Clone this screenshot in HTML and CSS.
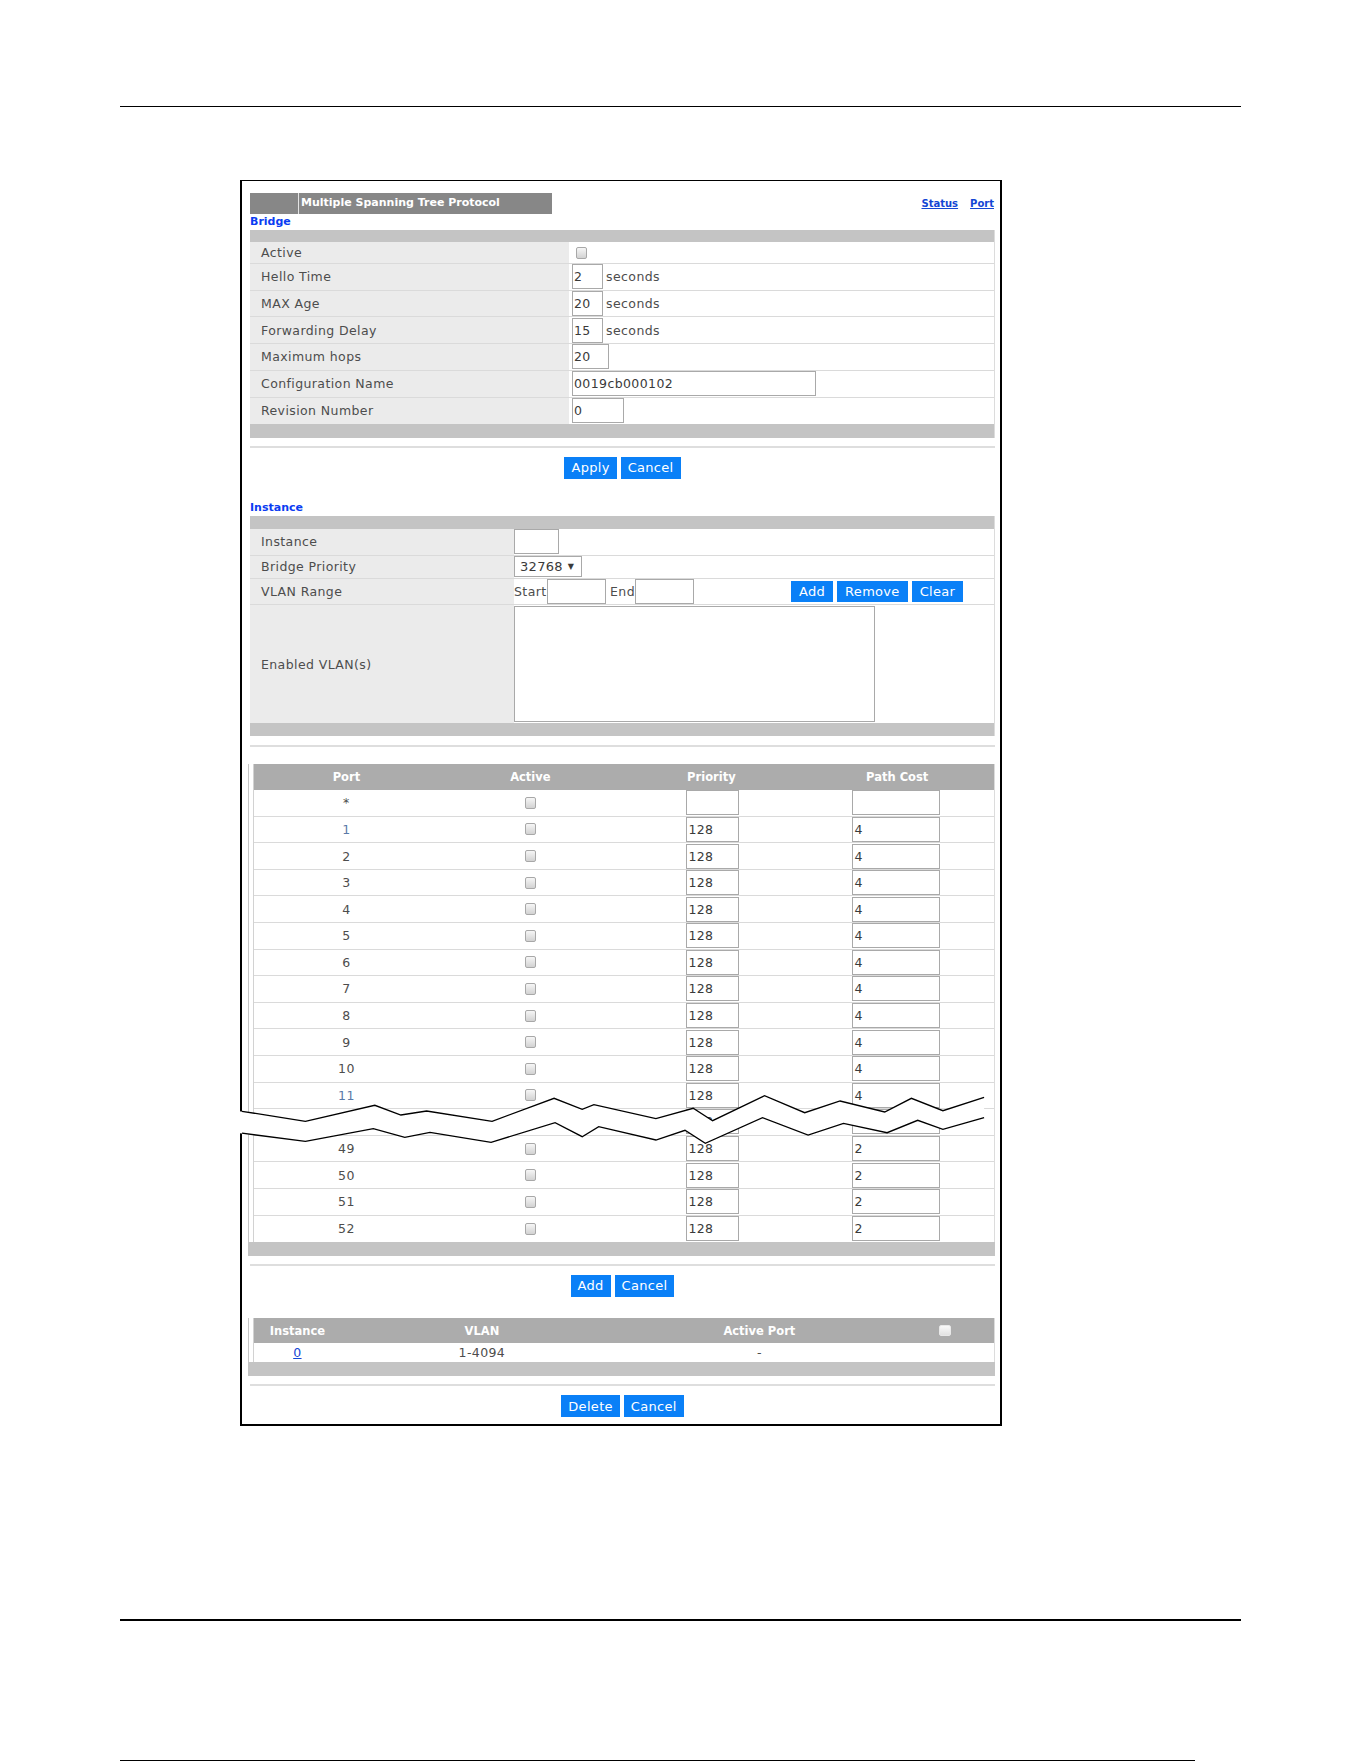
FILE: index.html
```html
<!DOCTYPE html>
<html>
<head>
    <meta charset="UTF-8">
    <title>Multiple Spanning Tree Protocol</title>
    <link rel="stylesheet" href="styles.css">
</head>
<body>
<div class="page">
    <div class="rule-top"></div>

    <div class="frame">
        <div class="title-row">
            <div class="title-bar"><span class="title-tab"></span><span class="title-text">Multiple Spanning Tree Protocol</span></div>
            <div class="top-links"><a href="#">Status</a><a href="#">Port</a></div>
        </div>

        <div class="sec-head">Bridge</div>
        <div class="form-box bridge">
            <div class="bar"></div>
            <div class="frow short"><div class="flabel">Active</div><div class="fval"><span class="cb"></span></div></div>
            <div class="frow"><div class="flabel">Hello Time</div><div class="fval"><input class="inp w-sec" value="2"><span class="unit">seconds</span></div></div>
            <div class="frow"><div class="flabel">MAX Age</div><div class="fval"><input class="inp w-sec" value="20"><span class="unit">seconds</span></div></div>
            <div class="frow"><div class="flabel">Forwarding Delay</div><div class="fval"><input class="inp w-sec" value="15"><span class="unit">seconds</span></div></div>
            <div class="frow"><div class="flabel">Maximum hops</div><div class="fval"><input class="inp w-hops" value="20"></div></div>
            <div class="frow"><div class="flabel">Configuration Name</div><div class="fval"><input class="inp w-name" value="0019cb000102"></div></div>
            <div class="frow last"><div class="flabel">Revision Number</div><div class="fval"><input class="inp w-rev" value="0"></div></div>
            <div class="bar foot"></div>
        </div>

        <div class="sep"></div>
        <div class="btn-row"><button class="btn">Apply</button><button class="btn">Cancel</button></div>

        <div class="sec-head gap">Instance</div>
        <div class="form-box inst">
            <div class="bar"></div>
            <div class="frow"><div class="flabel">Instance</div><div class="fval"><input class="inp w-inst" value=""></div></div>
            <div class="frow prio"><div class="flabel">Bridge Priority</div><div class="fval"><span class="sel">32768<span class="arrow">&#9660;</span></span></div></div>
            <div class="frow"><div class="flabel">VLAN Range</div>
                <div class="fval">
                    <span>Start</span><input class="inp w-vlan" value="">
                    <span class="end-lbl">End</span><input class="inp w-vlan" value="">
                    <div class="vlan-btns"><button class="btn sm">Add</button><button class="btn sm">Remove</button><button class="btn sm">Clear</button></div>
                </div>
            </div>
            <div class="frow tall last"><div class="flabel">Enabled VLAN(s)</div><div class="fval"><textarea class="vlan-list"></textarea></div></div>
            <div class="bar foot"></div>
        </div>

        <div class="sep"></div>

        <div class="grid-wrap ports">
            <div class="inner">
                <div class="prow phead"><div>Port</div><div>Active</div><div>Priority</div><div>Path Cost</div></div>
                <div class="prow"><div class="pnum">*</div><div><span class="cb"></span></div><div class="c-pri"><input class="inp pri" value=""></div><div class="c-cost"><input class="inp cost" value=""></div></div>
                <div class="prow"><div class="pnum blue">1</div><div><span class="cb"></span></div><div class="c-pri"><input class="inp pri" value="128"></div><div class="c-cost"><input class="inp cost" value="4"></div></div>
                <div class="prow"><div class="pnum">2</div><div><span class="cb"></span></div><div class="c-pri"><input class="inp pri" value="128"></div><div class="c-cost"><input class="inp cost" value="4"></div></div>
                <div class="prow"><div class="pnum">3</div><div><span class="cb"></span></div><div class="c-pri"><input class="inp pri" value="128"></div><div class="c-cost"><input class="inp cost" value="4"></div></div>
                <div class="prow"><div class="pnum">4</div><div><span class="cb"></span></div><div class="c-pri"><input class="inp pri" value="128"></div><div class="c-cost"><input class="inp cost" value="4"></div></div>
                <div class="prow"><div class="pnum">5</div><div><span class="cb"></span></div><div class="c-pri"><input class="inp pri" value="128"></div><div class="c-cost"><input class="inp cost" value="4"></div></div>
                <div class="prow"><div class="pnum">6</div><div><span class="cb"></span></div><div class="c-pri"><input class="inp pri" value="128"></div><div class="c-cost"><input class="inp cost" value="4"></div></div>
                <div class="prow"><div class="pnum">7</div><div><span class="cb"></span></div><div class="c-pri"><input class="inp pri" value="128"></div><div class="c-cost"><input class="inp cost" value="4"></div></div>
                <div class="prow"><div class="pnum">8</div><div><span class="cb"></span></div><div class="c-pri"><input class="inp pri" value="128"></div><div class="c-cost"><input class="inp cost" value="4"></div></div>
                <div class="prow"><div class="pnum">9</div><div><span class="cb"></span></div><div class="c-pri"><input class="inp pri" value="128"></div><div class="c-cost"><input class="inp cost" value="4"></div></div>
                <div class="prow"><div class="pnum">10</div><div><span class="cb"></span></div><div class="c-pri"><input class="inp pri" value="128"></div><div class="c-cost"><input class="inp cost" value="4"></div></div>
                <div class="prow"><div class="pnum blue">11</div><div><span class="cb"></span></div><div class="c-pri"><input class="inp pri" value="128"></div><div class="c-cost"><input class="inp cost" value="4"></div></div>
                <div class="prow"><div class="pnum">48</div><div><span class="cb"></span></div><div class="c-pri"><input class="inp pri" value="128"></div><div class="c-cost"><input class="inp cost" value="2"></div></div>
                <div class="prow"><div class="pnum">49</div><div><span class="cb"></span></div><div class="c-pri"><input class="inp pri" value="128"></div><div class="c-cost"><input class="inp cost" value="2"></div></div>
                <div class="prow"><div class="pnum">50</div><div><span class="cb"></span></div><div class="c-pri"><input class="inp pri" value="128"></div><div class="c-cost"><input class="inp cost" value="2"></div></div>
                <div class="prow"><div class="pnum">51</div><div><span class="cb"></span></div><div class="c-pri"><input class="inp pri" value="128"></div><div class="c-cost"><input class="inp cost" value="2"></div></div>
                <div class="prow last"><div class="pnum">52</div><div><span class="cb"></span></div><div class="c-pri"><input class="inp pri" value="128"></div><div class="c-cost"><input class="inp cost" value="2"></div></div>
            </div>
        </div>
        <div class="bar foot port-foot"></div>

        <div class="sep"></div>
        <div class="btn-row"><button class="btn">Add</button><button class="btn">Cancel</button></div>

        <div class="grid-wrap list">
            <div class="inner">
                <div class="lrow lhead"><div>Instance</div><div>VLAN</div><div>Active Port</div><div><span class="cb light"></span></div></div>
                <div class="lrow"><div><a href="#">0</a></div><div>1-4094</div><div>-</div><div></div></div>
            </div>
        </div>
        <div class="bar foot list-foot"></div>

        <div class="sep"></div>
        <div class="btn-row"><button class="btn">Delete</button><button class="btn">Cancel</button></div>
    </div>

    <div class="rule-bottom"></div>
    <div class="rule-edge"></div>

    <!-- page break mark over the port list -->
    <svg class="break" width="754" height="60" viewBox="0 0 754 60">
        <polygon fill="#fff" points="0,20.7 69.4,31.3 138.8,15.3 164.9,25 190.6,21 256.1,31.3 318.1,8.3 346.2,19.3 357.9,14.7 419.9,28.7 457.2,18.3 476.6,30.7 528.5,5.7 568.7,22.7 604.1,11 648.7,22 675.4,8.3 706.9,20.7 748.1,7.3 748.1,27.7 706.9,39.3 681.7,30.3 651.1,42.7 607.5,33.3 572.1,45 526.5,27.7 469.3,53.3 449,40.3 419.9,50 362.7,36.7 346.2,46.7 319.1,32.7 255.1,52.3 194,42.3 168.8,47.3 137.3,38.7 69.4,51.3 0,42.7"/>
        <polyline fill="none" stroke="#000" stroke-width="1.3" points="6,21.3 69.4,31.3 138.8,15.3 164.9,25 190.6,21 256.1,31.3 318.1,8.3 346.2,19.3 357.9,14.7 419.9,28.7 457.2,18.3 476.6,30.7 528.5,5.7 568.7,22.7 604.1,11 648.7,22 675.4,8.3 706.9,20.7 748.1,7.3"/>
        <polyline fill="none" stroke="#000" stroke-width="1.3" points="6,43.2 69.4,51.3 137.3,38.7 168.8,47.3 194,42.3 255.1,52.3 319.1,32.7 346.2,46.7 362.7,36.7 419.9,50 449,40.3 469.3,53.3 526.5,27.7 572.1,45 607.5,33.3 651.1,42.7 681.7,30.3 706.9,39.3 748.1,27.7"/>
    </svg>
</div>
</body>
</html>
```
FILE: styles.css
```css
* {
    box-sizing: border-box;
}

body {
    margin: 0;
    background: #fff;
    font-family: "DejaVu Sans", sans-serif;
    font-size: 12.5px;
    letter-spacing: 0.4px;
    color: #4d4d4d;
}

.page {
    position: relative;
    width: 1361px;
    height: 1761px;
    overflow: hidden;
}

.rule-top {
    margin: 106px 0 0 120px;
    width: 1121px;
    height: 1px;
    background: #000;
}

.rule-bottom {
    margin: 193px 0 0 120px;
    width: 1121px;
    height: 2px;
    background: #000;
}

.rule-edge {
    margin: 139px 0 0 120px;
    width: 1075px;
    height: 1px;
    background: #000;
}

.frame {
    width: 762px;
    margin: 73px 0 0 240px;
    border: 2px solid #000;
    border-top-width: 1px;
    padding: 12px 5px 6.5px 8px;
}

/* title */
.title-row {
    display: flex;
    justify-content: space-between;
    align-items: center;
    height: 20.5px;
}

.title-bar {
    display: flex;
    width: 302px;
    height: 20.5px;
    background: #878787;
}

.title-tab {
    width: 49px;
    border-right: 1px solid #e4e4e4;
}

.title-text {
    padding-left: 2px;
    color: #fff;
    font-weight: bold;
    font-size: 11px;
    letter-spacing: 0;
    line-height: 20.5px;
}

.top-links {
    display: flex;
    gap: 12px;
    padding-right: 1px;
}

.top-links a {
    color: #1446d4;
    font-weight: bold;
    font-size: 10px;
    letter-spacing: 0;
}

.sec-head {
    height: 16.6px;
    line-height: 16.6px;
    color: #0a3cf2;
    font-weight: bold;
    font-size: 11px;
    letter-spacing: 0;
}

.sec-head.gap {
    margin-top: 21px;
}

/* form tables */
.form-box {
    border-right: 1px solid #dcdcdc;
}

.bar {
    height: 12.4px;
    background: #c4c4c4;
}

.bar.foot {
    height: 13.4px;
}

.frow {
    display: flex;
    height: 26.7px;
    border-bottom: 1px solid #dadada;
}

.frow.short {
    height: 21.6px;
}

.frow.last {
    border-bottom: 0;
}

.flabel {
    width: 319px;
    display: flex;
    align-items: center;
    padding-left: 11px;
    background: #ebebeb;
}

.fval {
    flex: 1;
    display: flex;
    align-items: center;
    padding-left: 3px;
}

.inst .flabel {
    width: 264px;
}

.inst .fval {
    padding-left: 0;
}

.inst .frow.prio {
    height: 23px;
}

.inst .frow.tall {
    height: 117.7px;
}

.inp {
    height: 25px;
    margin: 0;
    padding: 0 1px;
    border: 1px solid #a9a9a9;
    background: #fff;
    font: inherit;
    letter-spacing: 0.4px;
    color: #3a3a3a;
    outline: none;
}

.w-sec { width: 30.6px; }
.w-hops { width: 37px; }
.w-name { width: 244px; }
.w-rev { width: 52px; }
.w-inst { width: 44.5px; }
.w-vlan { width: 59px; }

.unit {
    margin-left: 3.5px;
}

.end-lbl {
    margin-left: 4.5px;
}

.sel {
    display: flex;
    align-items: center;
    width: 67.7px;
    height: 21.4px;
    padding-left: 5px;
    border: 1px solid #a9a9a9;
    color: #3a3a3a;
    font-size: 13px;
    letter-spacing: 0.3px;
}

.sel .arrow {
    margin-left: 5px;
    font-size: 8px;
}

.vlan-btns {
    display: flex;
    gap: 4px;
    margin-left: 97px;
}

.vlan-list {
    width: 361px;
    height: 115.7px;
    margin: 0;
    border: 1px solid #a9a9a9;
    resize: none;
}

.cb {
    display: inline-block;
    width: 11px;
    height: 12px;
    border: 1px solid #a8a8a8;
    border-radius: 2px;
    background: linear-gradient(#f6f6f6, #d2d2d2);
}

.bridge .cb {
    margin-left: 4px;
}

.cb.light {
    border-color: #e8e8e8;
    background: linear-gradient(#fafafa, #e2e2e2);
}

/* separators and buttons */
.sep {
    height: 2px;
    margin-top: 8.3px;
    background: #dedede;
}

.btn-row {
    display: flex;
    justify-content: center;
    gap: 4px;
    margin-top: 9px;
}

.btn {
    height: 22px;
    margin: 0;
    padding: 0 7px;
    border: 0;
    background: #0a80f7;
    color: #fff;
    font: inherit;
    font-size: 13px;
    letter-spacing: 0.3px;
}

.btn.sm {
    height: 21.7px;
    padding: 0 8px;
}

/* port and instance lists */
.grid-wrap {
    margin-left: -2px;
    padding-left: 4.4px;
    border-left: 1px solid #c6c6c6;
}

.grid-wrap .inner {
    border-left: 1px solid #d2d2d2;
    border-right: 1px solid #dcdcdc;
}

.ports {
    margin-top: 17.4px;
}

.port-foot {
    margin-left: -2px;
    height: 14.2px;
}

.prow {
    display: grid;
    grid-template-columns: 184px 184px 178px 1fr;
    height: 26.6px;
    border-bottom: 1px solid #dadada;
}

.prow > div {
    display: flex;
    align-items: center;
    justify-content: center;
}

.prow.last {
    border-bottom: 0;
}

.phead {
    height: 26px;
    border-bottom: 0;
    background: #acacac;
    color: #fff;
    font-weight: bold;
    font-size: 11.5px;
    letter-spacing: 0;
}

.prow .c-pri {
    justify-content: flex-start;
    padding-left: 64px;
}

.prow .c-cost {
    justify-content: flex-start;
    padding-left: 52px;
}

.pnum.blue {
    color: #5a7aa8;
}

.pri { width: 52.3px; }
.cost { width: 87.3px; }

.list {
    margin-top: 21.6px;
}

.list-foot {
    margin-left: -2px;
    height: 13.7px;
}

.lrow {
    display: grid;
    grid-template-columns: 86px 283px 272px 1fr;
    height: 19.6px;
}

.lrow > div {
    display: flex;
    align-items: center;
    justify-content: center;
}

.lhead {
    height: 24.4px;
    background: #acacac;
    color: #fff;
    font-weight: bold;
    font-size: 11.5px;
    letter-spacing: 0;
}

.lhead .cb {
    width: 12px;
    height: 11px;
}

.lrow a {
    color: #1446d4;
}

.break {
    position: absolute;
    left: 236px;
    top: 1090px;
}
```
